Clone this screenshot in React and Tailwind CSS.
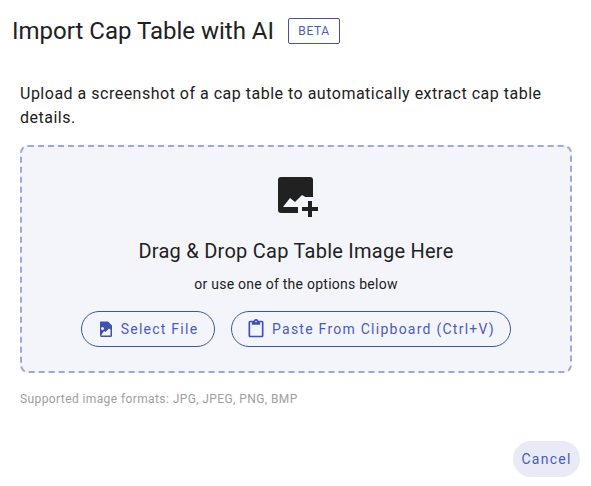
import { MdOutlineContentPaste } from 'react-icons/md';

function DropIcon() {
    return (
        <svg width="44" height="42" viewBox="0 0 44 42" className="block">
            <path
                fill="#212121"
                d="M7 0h29a3 3 0 0 1 3 3v17h-8v4h-7v12H7a3 3 0 0 1-3-3V3a3 3 0 0 1 3-3z"
            />
            <path fill="#f4f5fb" d="M9 30l7-9 5 4 7-7 5 3 6-1v10H24v0H9z" />
            <path fill="#212121" d="M34 24h4v6h6v4h-6v6h-4v-6h-6v-4h6z" />
        </svg>
    );
}

function FileImageIcon() {
    return (
        <svg width="18" height="18" viewBox="0 0 18 18" className="block">
            <path
                fill="#3f51b5"
                fillRule="evenodd"
                d="M4 1.500h7l4 4v10A1.500 1.500 0 0 1 13.500 17h-9A1.500 1.500 0 0 1 3 15.500V2.500a1 1 0 0 1 1-1zM5.500 7a1.500 1.500 0 1 0 0 3 1.500 1.500 0 0 0 0-3zM4 15.500h9.500V9.500L12 8.500 8.500 12 7 11z"
            />
        </svg>
    );
}

export default function App() {
    return (
        <div className="h-[486px] w-[591px] overflow-hidden bg-white font-['Roboto',sans-serif] text-[#212121]">
            <div className="flex h-[62px] items-center pl-3">
                <h1 className="text-[24px] font-normal leading-none">Import Cap Table with AI</h1>
                <span className="ml-[14px] flex h-[26px] w-[52px] items-center justify-center rounded-[2px] border border-[#3f51b5] text-[12px] tracking-[0.6px] text-[#4a5bbd]">
                    BETA
                </span>
            </div>
            <div className="px-5 pt-[20px]">
                <p className="text-[16px] leading-[24px] tracking-[0.5px]">
                    Upload a screenshot of a cap table to automatically extract cap table details.
                </p>
                <div className="mt-[15px] flex h-[228px] w-[552px] flex-col items-center rounded-[8px] border-2 border-dashed border-[#9fa8da] bg-[#f4f5fb] pt-[30px]">
                    <DropIcon />
                    <div className="mt-[18px] text-[20px] leading-[28px] tracking-[0.25px]">Drag &amp; Drop Cap Table Image Here</div>
                    <div className="mt-[9px] text-[14px] leading-[20px] tracking-[0.25px]">or use one of the options below</div>
                    <div className="mt-[17px] flex gap-4">
                        <button className="flex h-[36px] w-[134px] items-center justify-center gap-[6px] rounded-full border border-[#3f51b5] pr-[1px] text-[14px] tracking-[1.25px] text-[#4a5bbd]">
                            <FileImageIcon />
                            Select File
                        </button>
                        <button className="flex h-[36px] w-[280px] items-center justify-center gap-[6px] rounded-full border border-[#3f51b5] pr-[1px] text-[14px] tracking-[1.25px] text-[#4a5bbd]">
                            <MdOutlineContentPaste size={20} className="text-[#3f51b5]" />
                            Paste From Clipboard (Ctrl+V)
                        </button>
                    </div>
                </div>
                <p className="mt-[16px] text-[12px] leading-[20px] tracking-[0.4px] text-[#9e9e9e]">
                    Supported image formats: JPG, JPEG, PNG, BMP
                </p>
            </div>
            <div className="mt-[32px] flex justify-end pr-[11px]">
                <button className="flex h-[36px] w-[67px] items-center justify-center rounded-full bg-[#e8eaf6] text-[14px] tracking-[1.25px] text-[#4a5bbd]">
                    Cancel
                </button>
            </div>
        </div>
    );
}
